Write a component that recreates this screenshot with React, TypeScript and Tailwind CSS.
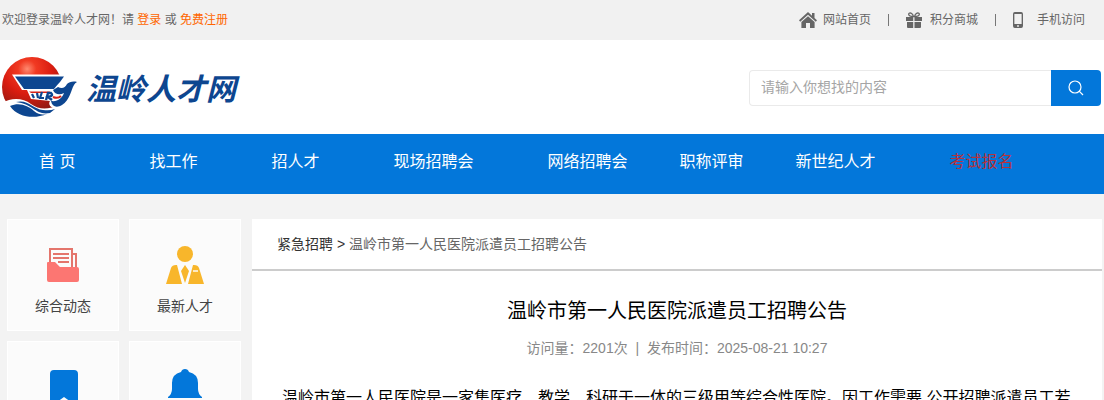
import React from "react";
import clsx from "clsx";

const NAV = [
  { title: "首 页" },
  { title: "找工作" },
  { title: "招人才" },
  { title: "现场招聘会" },
  { title: "网络招聘会" },
  { title: "职称评审", narrow: true },
  { title: "新世纪人才" },
  { title: "考试报名", hot: true },
];

const Logo = () => (
  <svg width="78" height="62" viewBox="0 0 78 62" aria-hidden="true">
    <defs>
      <radialGradient id="sun" cx="0.42" cy="0.2" r="0.75">
        <stop offset="0" stopColor="#ff8a70" />
        <stop offset="0.2" stopColor="#f13a22" />
        <stop offset="0.55" stopColor="#d91c10" />
        <stop offset="1" stopColor="#8c1a12" />
      </radialGradient>
    </defs>
    <circle cx="32" cy="31" r="30" fill="url(#sun)" />
    <path d="M2 47C12 41 23 42 31 48C40 54 48 54 60 48L58 62H0Z" fill="#fff" />
    <path d="M10 50C20 46 28 50 34 55C39 59 43 59 47 58C35 63 18 62 10 50Z" fill="#0d4690" />
    <path d="M16 46C28 43 33 53 43 54Q50 55 55 53L50 57C36 60 34 48 16 46Z" fill="#0d4690" />
    <path
      d="M12 18.5H66L62 28C67 24 73 24 78 25C74 28 73 33 70 40C67 48 60 53 54 52C50 51 48 48 50 45L31 43L27 34H22Z"
      fill="#fff"
    />
    <path d="M15 20.5H64L60 26Q57 29 54 33H24Z" fill="#0d4690" />
    <path d="M29 35.5H50L49 37H31Z" fill="#d62318" />
    <path d="M32 38L34 42M37 37L38 42M42 36L40 42H44" fill="none" stroke="#0d4690" strokeWidth="2.2" />
    <path d="M46 44L48 37H51Q54 40 48 41L52 44" fill="none" stroke="#0d4690" strokeWidth="2.4" />
    <path
      d="M77 26C73 25 69 26 67 28C65 32 62 33 58 31L53 34C55 39 60 39 64 37C62 42 58 46 51 45C52 51 57 52 62 49C70 44 71 34 74 29Q75 27 77 26Z"
      fill="#0d4690"
    />
    <path d="M53 41Q58 43 61 40" fill="none" stroke="#d62318" strokeWidth="2" />
  </svg>
);

const HomeIcon = () => (
  <svg width="18" height="17" viewBox="0 0 18 17" fill="#666" aria-hidden="true">
    <path d="M9 0L13 3.7V1H15.5V6L18 8.3L16.8 9.7L9 2.7L1.2 9.7L0 8.3Z" />
    <path d="M9 4.2L15.6 10V16H11V11H7V16H2.4V10Z" />
  </svg>
);

const GiftIcon = () => (
  <svg width="16" height="16" viewBox="0 0 16 16" fill="#666" aria-hidden="true">
    <path d="M0 5H7.2V9H0ZM8.5 5H16V9H8.5ZM1 10H7.2V16H2Q1 16 1 15ZM8.5 10H15V15Q15 16 14 16H8.5Z" />
    <path d="M7.5 4.6C1 4.6 2 0 5 1.2Q7 2 7.5 4.6ZM8.5 4.6C15 4.6 14 0 11 1.2Q9 2 8.5 4.6Z" fill="none" stroke="#666" strokeWidth="1.3" />
  </svg>
);

const PhoneIcon = () => (
  <svg width="10" height="16" viewBox="0 0 11 16" preserveAspectRatio="none" aria-hidden="true">
    <path fill="#666" fillRule="evenodd" d="M2 0H9Q11 0 11 2V14Q11 16 9 16H2Q0 16 0 14V2Q0 0 2 0ZM1.5 2V12H9.5V2ZM4.5 13.2V14.7H6.5V13.2Z" />
  </svg>
);

const FolderIcon = () => (
  <svg width="40" height="40" viewBox="0 0 40 40" aria-hidden="true">
    <path d="M7 20V4H29V24M29 9H33V24" fill="none" stroke="#e4756c" strokeWidth="2" />
    <path d="M10 9H26M10 13H26M15 17H26" stroke="#e4756c" strokeWidth="2" />
    <path d="M5 17H12L17 22H34Q36 22 36 24V35Q36 37 34 37H6Q4 37 4 35V18Q4 17 5 17Z" fill="#fc7672" />
  </svg>
);

const PersonIcon = () => (
  <svg width="40" height="40" viewBox="0 0 40 40" fill="#f8b62b" aria-hidden="true">
    <circle cx="20" cy="9" r="8" />
    <path d="M1 39L6 23Q7 20 11 20H12L17 39ZM39 39L34 23Q33 20 29 20H28L23 39Z" />
    <path d="M20 20L24 26L20 38L16 26Z" />
    <path d="M28 26H33" stroke="#fff" strokeWidth="1.4" />
  </svg>
);

const BookmarkIcon = () => (
  <svg width="40" height="40" viewBox="0 0 40 40" fill="#0377da" aria-hidden="true">
    <path d="M11 3H31Q35 3 35 7V40L21 30L7 40V7Q7 3 11 3Z" />
  </svg>
);

const BellIcon = () => (
  <svg width="40" height="40" viewBox="0 0 40 40" fill="#0377da" aria-hidden="true">
    <path d="M16 5Q17 2 20 2T24 5Q33 7 33 16V22Q33 27 37 30V31H3V30Q7 27 7 22V16Q7 7 16 5Z" />
    <path d="M14 34H26Q25 39 20 39T14 34Z" />
  </svg>
);

const TILES = [
  { title: "综合动态", icon: FolderIcon },
  { title: "最新人才", icon: PersonIcon },
  { title: "", label: "收藏", icon: BookmarkIcon },
  { title: "", label: "通知", icon: BellIcon },
];

const TopBar = () => (
  <div className="flex h-10 shrink-0 items-center justify-between bg-[#f1f1f1] pr-[19px] pl-0.5 text-xs text-[#666]">
    <p>
      欢迎登录温岭人才网！请 <a href="#login" className="text-[#f60]">登录</a> 或{" "}
      <a href="#register" className="text-[#f60]">免费注册</a>
    </p>
    <div className="flex items-center">
      <a href="#home" className="flex items-center gap-1.5">
        <HomeIcon />
        网站首页
      </a>
      <span className="mx-[17px] h-3 w-px bg-[#777]" />
      <a href="#mall" className="flex items-center gap-2">
        <GiftIcon />
        积分商城
      </a>
      <span className="mx-[17px] h-3 w-px bg-[#777]" />
      <a href="#mobile" className="flex items-center gap-3.5">
        <PhoneIcon />
        手机访问
      </a>
    </div>
  </div>
);

const Header = () => (
  <header className="flex h-[94px] shrink-0 items-center justify-between bg-white pr-[3px]">
    <a href="#home" className="flex items-center gap-2">
      <Logo />
      <span className="pt-1.5 text-[30px] leading-9 font-bold text-[#0d4690] italic">温岭人才网</span>
    </a>
    <form className="mt-0.5 flex h-9" onSubmit={(e) => e.preventDefault()}>
      <input
        type="text"
        aria-label="搜索"
        placeholder="请输入你想找的内容"
        className="w-[302px] rounded-l-sm border border-r-0 border-[#eaeaea] bg-white px-[11px] pb-0.5 text-sm outline-none placeholder:text-[#a5a5a5]"
      />
      <button type="submit" aria-label="搜索" className="flex w-[50px] items-center justify-center rounded-r-sm bg-[#0377da]">
        <svg width="16" height="16" viewBox="0 0 16 16" fill="none" stroke="#fff" strokeWidth="1.2" aria-hidden="true">
          <circle cx="7" cy="7" r="6" />
          <path d="M11.2 11.2L15 15" />
        </svg>
      </button>
    </form>
  </header>
);

const App = () => {
  return (
    <div className="flex h-screen flex-col overflow-hidden bg-[#f3f3f3] font-['Liberation_Sans','Noto_Sans_CJK_SC',sans-serif]">
      <TopBar />
      <Header />
      <nav className="flex h-[60px] shrink-0 bg-[#0377da] px-0.5 pb-1">
        {NAV.map(({ title, narrow, hot }) => (
          <a
            key={title}
            href="#nav"
            className={clsx("flex items-center text-base whitespace-nowrap", narrow ? "px-[15px]" : "px-[37px]", hot ? "text-[#b5323c]" : "text-white")}
          >
            {title}
          </a>
        ))}
      </nav>

      <div className="mt-[25px] flex items-start gap-[11px] pr-0.5 pl-[7px]">
        <aside className="grid shrink-0 grid-cols-2 gap-2.5">
          {TILES.map(({ title, label, icon: Icon }, i) => (
            <a
              key={i}
              href="#tile"
              aria-label={label}
              className="flex size-28 flex-col items-center gap-[11px] border border-white bg-[#fbfbfb] pt-[25px] text-sm text-[#444]"
            >
              <Icon />
              {title}
            </a>
          ))}
        </aside>

        <main className="min-w-0 flex-1 bg-white">
          <div className="border-b-2 border-[#ccc] px-[25px] text-sm leading-[50px] text-[#666]">
            <a href="#jobs" className="text-[#333]">紧急招聘</a> <span className="text-[#333]">&gt;</span> 温岭市第一人民医院派遣员工招聘公告
          </div>
          <article className="px-[30px] pt-6 pb-10">
            <h1 className="text-center text-xl leading-8">温岭市第一人民医院派遣员工招聘公告</h1>
            <p className="mt-[11px] text-center text-sm text-[#888]">
              访问量：2201次&nbsp; |&nbsp; 发布时间：2025-08-21 10:27
            </p>
            <p className="mt-7 text-base">
              温岭市第一人民医院是一家集医疗、教学、科研于一体的三级甲等综合性医院。因工作需要,公开招聘派遣员工若
            </p>
          </article>
        </main>
      </div>
    </div>
  );
};

export default App;
